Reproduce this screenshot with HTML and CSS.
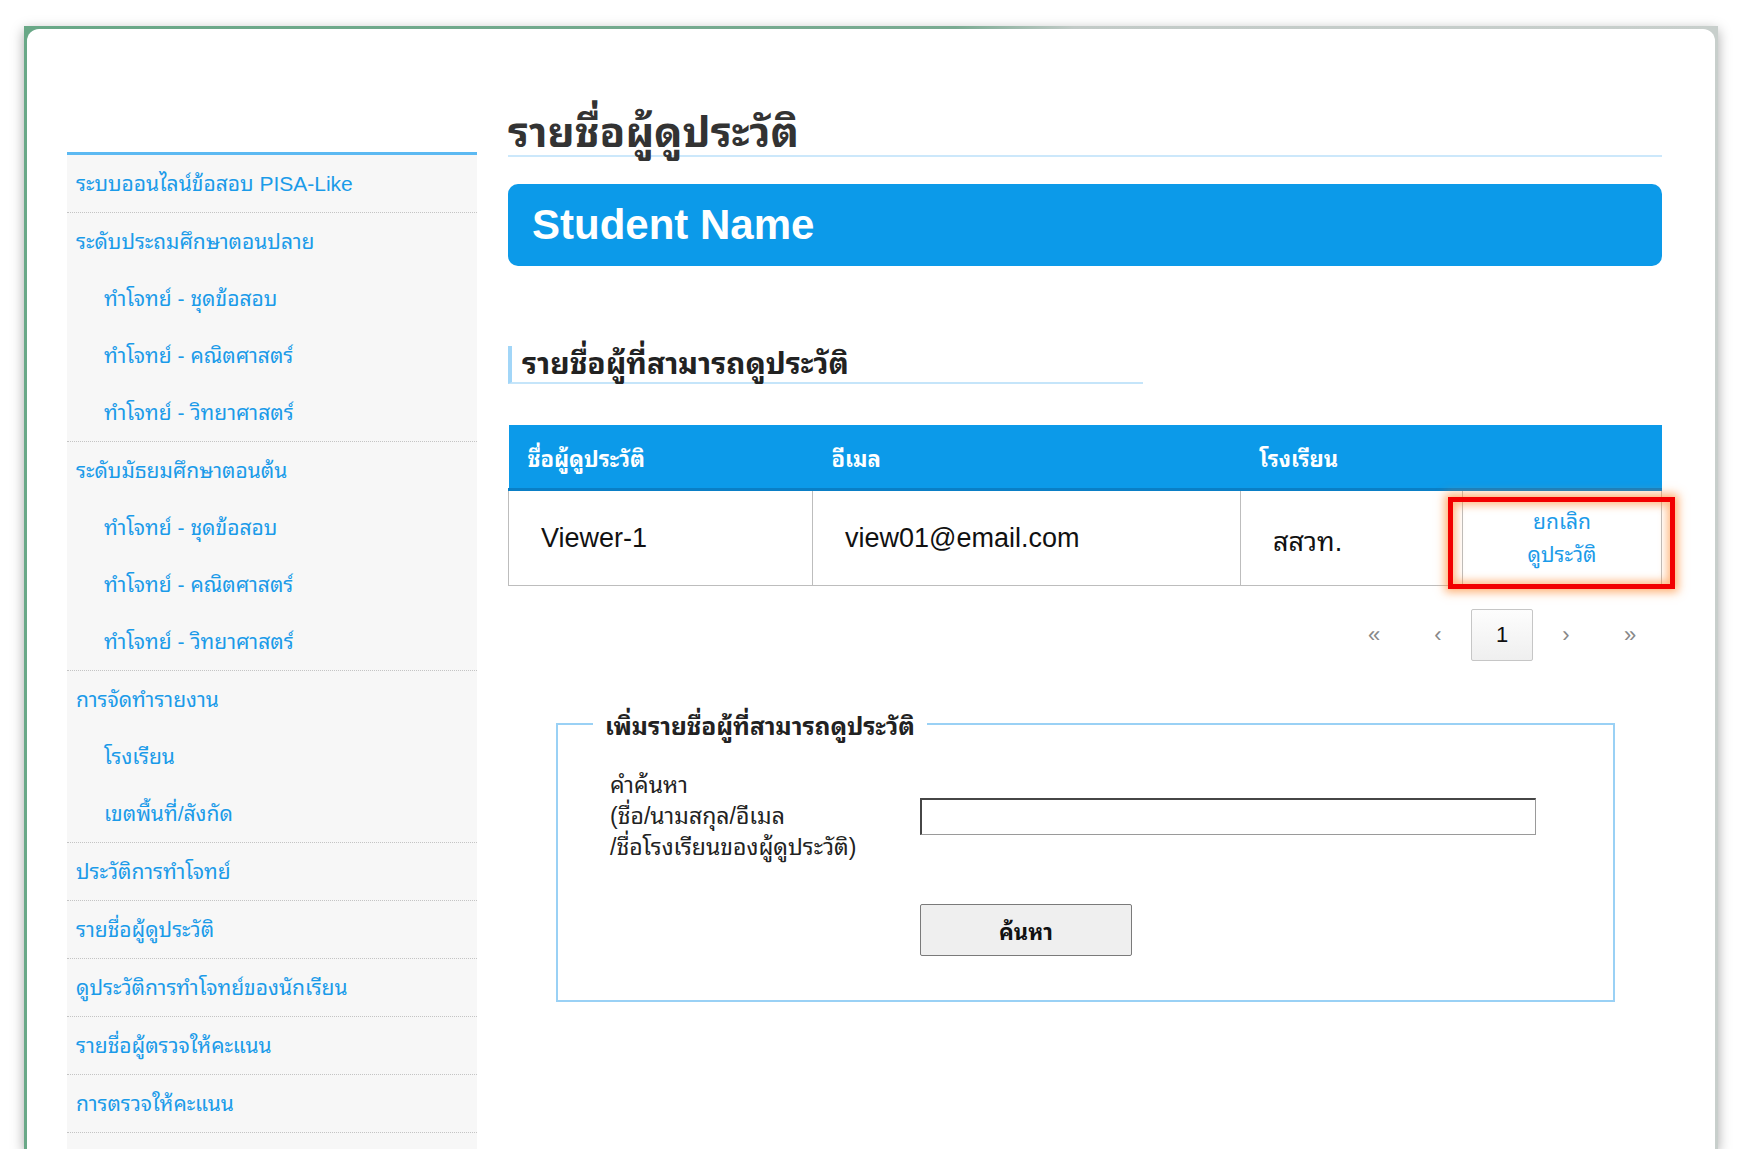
FILE: index.html
```html
<!DOCTYPE html>
<html lang="th">

<head>
    <meta charset="UTF-8">
    <meta name="viewport" content="width=device-width, initial-scale=1.0">
    <title>รายชื่อผู้ดูประวัติ</title>
    <link rel="stylesheet" href="styles.css">
</head>

<body>

    <div class="frame">
        <div class="panel">
            <aside class="menu">
                <div class="grupo">
                    <a class="item" href="#">ระบบออนไลน์ข้อสอบ PISA-Like</a>
                </div>
                <div class="grupo">
                    <a class="item" href="#">ระดับประถมศึกษาตอนปลาย</a>
                    <a class="item sub" href="#">ทำโจทย์ - ชุดข้อสอบ</a>
                    <a class="item sub" href="#">ทำโจทย์ - คณิตศาสตร์</a>
                    <a class="item sub" href="#">ทำโจทย์ - วิทยาศาสตร์</a>
                </div>
                <div class="grupo">
                    <a class="item" href="#">ระดับมัธยมศึกษาตอนต้น</a>
                    <a class="item sub" href="#">ทำโจทย์ - ชุดข้อสอบ</a>
                    <a class="item sub" href="#">ทำโจทย์ - คณิตศาสตร์</a>
                    <a class="item sub" href="#">ทำโจทย์ - วิทยาศาสตร์</a>
                </div>
                <div class="grupo">
                    <a class="item" href="#">การจัดทำรายงาน</a>
                    <a class="item sub" href="#">โรงเรียน</a>
                    <a class="item sub" href="#">เขตพื้นที่/สังกัด</a>
                </div>
                <div class="grupo">
                    <a class="item" href="#">ประวัติการทำโจทย์</a>
                </div>
                <div class="grupo">
                    <a class="item" href="#">รายชื่อผู้ดูประวัติ</a>
                </div>
                <div class="grupo">
                    <a class="item" href="#">ดูประวัติการทำโจทย์ของนักเรียน</a>
                </div>
                <div class="grupo">
                    <a class="item" href="#">รายชื่อผู้ตรวจให้คะแนน</a>
                </div>
                <div class="grupo">
                    <a class="item" href="#">การตรวจให้คะแนน</a>
                </div>
            </aside>

            <main class="contenido">
                <h1 class="titulo">รายชื่อผู้ดูประวัติ</h1>
                <div class="alumno">Student Name</div>

                <h2 class="subtitulo">รายชื่อผู้ที่สามารถดูประวัติ</h2>

                <table class="tabla">
                    <colgroup>
                        <col class="c1">
                        <col class="c2">
                        <col class="c3">
                        <col class="c4">
                    </colgroup>
                    <thead>
                        <tr>
                            <th>ชื่อผู้ดูประวัติ</th>
                            <th>อีเมล</th>
                            <th>โรงเรียน</th>
                            <th></th>
                        </tr>
                    </thead>
                    <tbody>
                        <tr>
                            <td>Viewer-1</td>
                            <td>view01@email.com</td>
                            <td>สสวท.</td>
                            <td class="accion">
                                <a href="#">ยกเลิก<br>ดูประวัติ</a>
                                <span class="marca"></span>
                            </td>
                        </tr>
                    </tbody>
                </table>

                <div class="paginas">
                    <a href="#">«</a>
                    <a href="#">‹</a>
                    <span class="actual">1</span>
                    <a href="#">›</a>
                    <a href="#">»</a>
                </div>

                <fieldset class="agregar">
                    <legend>เพิ่มรายชื่อผู้ที่สามารถดูประวัติ</legend>
                    <div class="fila">
                        <label for="buscar">คำค้นหา<br>(ชื่อ/นามสกุล/อีเมล<br>/ชื่อโรงเรียนของผู้ดูประวัติ)</label>
                        <input type="text" id="buscar" name="buscar" />
                    </div>
                    <div class="fila">
                        <span></span>
                        <button type="button">ค้นหา</button>
                    </div>
                </fieldset>
            </main>
        </div>
    </div>

</body>

</html>
```

FILE: styles.css
```css
body {
    margin: 0;
    background-color: #fff;
    font-family: "Liberation Sans", Tahoma, "Noto Sans Thai Looped", Garuda, Loma, "Noto Sans Thai", "Noto Sans", sans-serif;
    color: #111;
}

a {
    text-decoration: none;
}

.frame {
    margin: 26px 23px 0 24px;
    height: 1120px;
    padding: 3px 3px 0 3px;
    background: linear-gradient(90deg, #69a887 0%, #7aab92 55%, #c2cac7 62%, #c8cfcc 100%);
    box-shadow: 0 4px 12px rgba(0, 0, 0, 0.35);
}

.panel {
    height: 100%;
    background-color: #fff;
    border-radius: 12px 12px 0 0;
    display: flex;
    gap: 31px;
    padding: 0 54px 0 40px;
    overflow: hidden;
}

/* menu lateral */
.menu {
    flex: 0 0 410px;
    margin-top: 123px;
    border-top: 3px solid #5cb9f2;
    background-color: #f7f7f7;
}

.grupo {
    border-bottom: 1px dotted #c4c4c4;
}

.item {
    display: block;
    height: 57px;
    line-height: 57px;
    padding-left: 9px;
    font-size: 21px;
    color: #1b9be9;
    white-space: nowrap;
}

.item.sub {
    padding-left: 37px;
}

/* contenido */
.contenido {
    flex: 0 0 1153px;
    padding-top: 82px;
}

.titulo {
    margin: 0;
    font-size: 42px;
    line-height: 44px;
    color: #333;
    border-bottom: 2px solid #cce8fb;
}

.alumno {
    margin-top: 27px;
    height: 82px;
    line-height: 82px;
    padding-left: 24px;
    border-radius: 10px;
    background-color: #0c9ae9;
    color: #fff;
    font-size: 42px;
    font-weight: bold;
}

.subtitulo {
    margin: 80px 0 0 0;
    width: 621px;
    height: 36px;
    line-height: 36px;
    padding-left: 10px;
    font-size: 30px;
    color: #222;
    border-left: 4px solid #a2d6f8;
    border-bottom: 2px solid #c5e5fa;
}

.tabla {
    margin-top: 41px;
    width: 100%;
    border-collapse: collapse;
    table-layout: fixed;
}

.c1 { width: 304px; }
.c2 { width: 428px; }
.c3 { width: 222px; }
.c4 { width: 199px; }

.tabla th {
    height: 63px;
    padding: 0 19px;
    background-color: #0c9ae9;
    border-bottom: 3px solid #0a7fc6;
    color: #fff;
    text-align: left;
    font-size: 22px;
}

.tabla td {
    height: 94px;
    padding: 0 32px;
    border: 1px solid #bdbdbd;
    border-top: 0;
    font-size: 27px;
}

.tabla td.accion {
    position: relative;
    padding: 0;
    text-align: center;
    font-size: 21px;
    line-height: 33px;
}

.accion a {
    color: #1b9be9;
}

.marca {
    position: absolute;
    left: -15px;
    right: -14px;
    top: 6px;
    bottom: -4px;
    border: 5px solid #f20000;
    box-shadow: 0 0 9px 3px rgba(255, 140, 50, 0.7), inset 0 0 9px 3px rgba(255, 140, 50, 0.6);
}

.paginas {
    margin-top: 23px;
    display: flex;
    justify-content: flex-end;
    gap: 2px;
    padding-right: 1px;
}

.paginas a,
.paginas span {
    width: 62px;
    height: 52px;
    line-height: 52px;
    text-align: center;
    font-size: 22px;
    color: #888;
}

.paginas .actual {
    box-sizing: border-box;
    border: 1px solid #c6c6c6;
    border-radius: 2px;
    background: linear-gradient(#fdfdfd, #efefef);
    color: #111;
    line-height: 50px;
}

.agregar {
    margin: 43px 47px 0 48px;
    padding: 26px 0 44px 52px;
    border: 2px solid #9ad1f5;
}

.agregar legend {
    margin-left: -17px;
    padding: 0 12px;
    font-size: 24.5px;
    font-weight: bold;
    color: #222;
}

.fila {
    display: grid;
    grid-template-columns: 310px 616px;
    align-items: center;
}

.fila + .fila {
    margin-top: 41px;
}

.fila label {
    font-size: 23px;
    line-height: 31px;
    color: #222;
}

.fila input {
    box-sizing: border-box;
    width: 616px;
    height: 37px;
    border: 2px inset #9a9a9a;
    border-width: 2px 1px 1px 2px;
    font-size: 20px;
}

.fila button {
    width: 212px;
    height: 52px;
    border: 1px solid #7a7a7a;
    border-radius: 2px;
    background-color: #efefef;
    font-family: inherit;
    font-size: 22px;
    font-weight: bold;
    color: #111;
}
```
